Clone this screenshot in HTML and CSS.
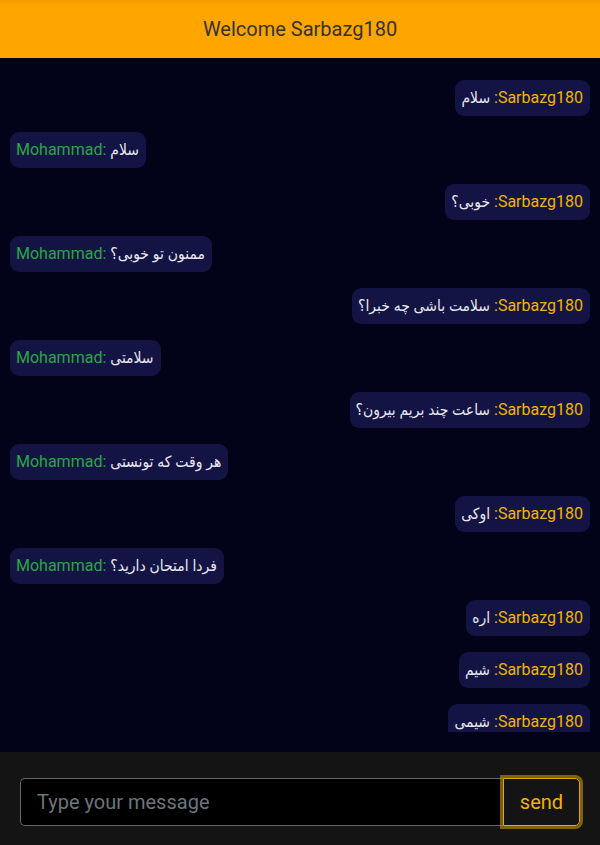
FILE: index.html
```html
<!DOCTYPE html>
<html lang="en">
<head>
<meta charset="utf-8">
<title>Chat</title>
<link rel="stylesheet" href="styles.css">
</head>
<body>
<div class="app">
  <header class="topbar">Welcome Sarbazg180</header>
  <main class="chat">
    <div class="list">
      <div class="msg me" dir="rtl"><span class="name">Sarbazg180:</span> <span class="text" dir="auto">سلام</span></div>
      <div class="msg other"><span class="name">Mohammad:</span> <span class="text" dir="auto">سلام</span></div>
      <div class="msg me" dir="rtl"><span class="name">Sarbazg180:</span> <span class="text" dir="auto">خوبی؟</span></div>
      <div class="msg other"><span class="name">Mohammad:</span> <span class="text" dir="auto">ممنون تو خوبی؟</span></div>
      <div class="msg me" dir="rtl"><span class="name">Sarbazg180:</span> <span class="text" dir="auto">سلامت باشی چه خبرا؟</span></div>
      <div class="msg other"><span class="name">Mohammad:</span> <span class="text" dir="auto">سلامتی</span></div>
      <div class="msg me" dir="rtl"><span class="name">Sarbazg180:</span> <span class="text" dir="auto">ساعت چند بریم بیرون؟</span></div>
      <div class="msg other"><span class="name">Mohammad:</span> <span class="text" dir="auto">هر وقت که تونستی</span></div>
      <div class="msg me" dir="rtl"><span class="name">Sarbazg180:</span> <span class="text" dir="auto">اوکی</span></div>
      <div class="msg other"><span class="name">Mohammad:</span> <span class="text" dir="auto">فردا امتحان دارید؟</span></div>
      <div class="msg me" dir="rtl"><span class="name">Sarbazg180:</span> <span class="text" dir="auto">اره</span></div>
      <div class="msg me" dir="rtl"><span class="name">Sarbazg180:</span> <span class="text" dir="auto">شیم</span></div>
      <div class="msg me" dir="rtl"><span class="name">Sarbazg180:</span> <span class="text" dir="auto">شیمی</span></div>
    </div>
  </main>
  <footer class="composer">
    <div class="input-group">
      <input class="field" type="text" placeholder="Type your message">
      <button class="send" type="button">send</button>
    </div>
  </footer>
</div>
</body>
</html>
```
FILE: styles.css
```css
* { box-sizing: border-box; }
html, body { margin: 0; padding: 0; }
body {
  font-family: Roboto, sans-serif;
  background: #020218;
}
.app {
  width: 600px;
  height: 845px;
  display: flex;
  flex-direction: column;
  overflow: hidden;
}
.topbar {
  height: 58px;
  flex: none;
  background: linear-gradient(#f09a00 0, #ffa500 4px, #ffa500 100%);
  color: #333333;
  font-size: 20px;
  display: flex;
  align-items: center;
  justify-content: center;
}
.chat {
  flex: 1;
  min-height: 0;
  padding: 14px 10px 20px;
  background: #020218;
  display: flex;
  flex-direction: column;
}
.list {
  flex: 1;
  min-height: 0;
  overflow: hidden;
  display: flex;
  flex-direction: column;
}
.msg {
  flex: none;
  margin: 8px 0;
  padding: 6px 7px 6px 6px;
  height: 36px;
  line-height: 24px;
  font-size: 16px;
  background: #141444;
  border-radius: 9px;
  color: #e8e8f2;
  white-space: nowrap;
}
.msg .text {
  font-family: Roboto, "DejaVu Sans Condensed", sans-serif;
  font-size: 15.5px;
}
.msg.me { align-self: flex-end; }
.msg.other { align-self: flex-start; }
.msg.me .name { color: #f0b400; }
.msg.other .name { color: #28a745; }
.composer {
  flex: none;
  height: 93px;
  background: #141414;
  padding: 26px 18px 19px 20px;
}
.input-group {
  display: flex;
  height: 48px;
}
.field {
  flex: 1;
  min-width: 0;
  height: 48px;
  background: #000000;
  border: 1px solid #666666;
  border-right: none;
  border-radius: 5px 0 0 5px;
  padding: 8px 16px;
  font-family: Roboto, sans-serif;
  font-size: 20px;
  color: #dddddd;
  outline: none;
}
.field::placeholder { color: #6c757d; }
.send {
  flex: none;
  width: 77px;
  height: 48px;
  margin-right: 2px;
  background: transparent;
  border: 1px solid #e0aa00;
  border-radius: 0 5px 5px 0;
  box-shadow: 0 0 0 3px rgba(200, 150, 0, 0.6);
  font-family: Roboto, sans-serif;
  font-size: 20px;
  color: #f0b400;
  padding: 0;
}
```
